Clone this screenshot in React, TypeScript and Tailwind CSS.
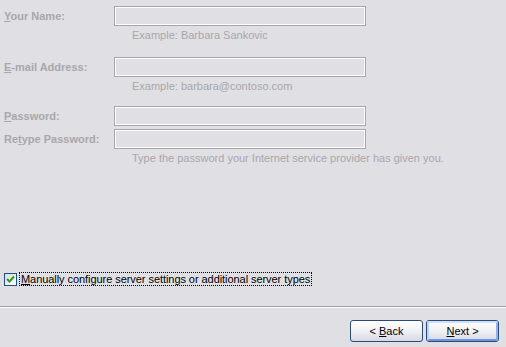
import React from 'react'

const label = 'text-[11px] font-bold text-[#a8a7ab] leading-[13px]'
const hint = 'text-[11px] text-[#a8a7ab] leading-[13px] pl-[132px]'

function Field({ w = 'w-[252px]' }: { w?: string }) {
  return (
    <div className={`${w} h-[20px] border border-[#a5a5aa]`}>
      <div className="w-full h-full border border-white" />
    </div>
  )
}

function Row({ children, field }: { children: React.ReactNode; field?: boolean }) {
  return (
    <div className="flex items-center h-[20px]">
      <div className={`w-[114px] pl-[4px] ${label}`}>{children}</div>
      {field !== false && <Field />}
    </div>
  )
}

function XpButton({ children, def }: { children: React.ReactNode; def?: boolean }) {
  return (
    <button className="w-[73px] h-[22px] rounded-[3px] border border-[#2a4a78] bg-gradient-to-b from-white via-[#f1f1f5] to-[#d7d8e2] p-0">
      <div
        className={`w-full h-full rounded-[2px] flex items-center justify-center text-[11px] text-black whitespace-pre ${
          def ? 'border-2 border-t-[#cfe0fb] border-l-[#b9d0f7] border-r-[#8fb1ef] border-b-[#6b95e6]' : ''
        }`}
      >
        {children}
      </div>
    </button>
  )
}

export default function App() {
  return (
    <div className="w-[506px] h-[347px] bg-[#e0dfe3] flex flex-col font-['Tahoma','Liberation_Sans',sans-serif] select-none overflow-hidden">
      <div className="pt-[6px]">
        <Row>
          <u>Y</u>our Name:
        </Row>
        <div className={`mt-[3px] ${hint}`}>Example: Barbara Sankovic</div>

        <div className="mt-[15px]">
          <Row>
            <u>E</u>-mail Address:
          </Row>
        </div>
        <div className={`mt-[3px] ${hint}`}>Example: barbara@contoso.com</div>

        <div className="mt-[13px]">
          <Row>
            <u>P</u>assword:
          </Row>
        </div>
        <div className="mt-[3px]">
          <Row>
            Re<u>t</u>ype Password:
          </Row>
        </div>
        <div className={`mt-[3px] ${hint}`}>
          Type the password your Internet service provider has given you.
        </div>
      </div>

      <div className="flex-1" />

      <div className="flex items-center pl-[4px] h-[14px] mb-[20px]">
        <div className="w-[13px] h-[13px] border border-[#1c5180] bg-gradient-to-br from-[#dcdcd7] to-white flex items-center justify-center">
          <svg width="9" height="9" viewBox="0 0 9 9">
            <path d="M1 4 L3.5 6.5 L8 1.5" fill="none" stroke="#21a121" strokeWidth="2" />
          </svg>
        </div>
        <div className="ml-[2px] h-[14px] px-[1px] border border-dotted border-black flex items-center text-[11px] text-black leading-[12px] tracking-[-0.06px]">
          <span>
            <u>M</u>anually configure server settings or additional server types
          </span>
        </div>
      </div>

      <div className="h-[1px] bg-[#a0a0a4]" />
      <div className="h-[1px] bg-white" />

      <div className="flex justify-end gap-[3px] pr-[7px] pt-[12px] pb-[5px]">
        <XpButton>
          {'< '}
          <u>B</u>ack
        </XpButton>
        <XpButton def>
          <u>N</u>ext{' >'}
        </XpButton>
      </div>
    </div>
  )
}
